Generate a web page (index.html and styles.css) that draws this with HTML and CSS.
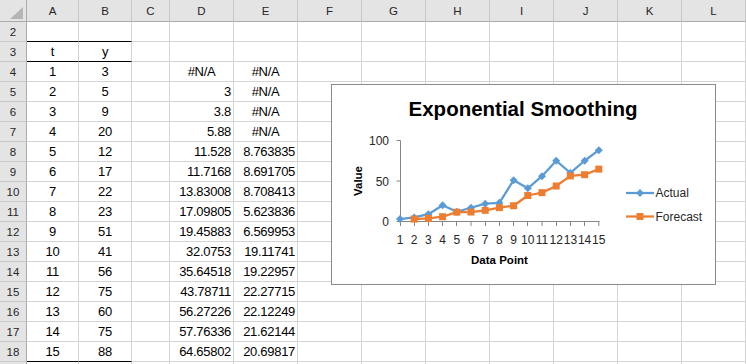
FILE: index.html
```html
<!DOCTYPE html>
<html>
<head>
<meta charset="utf-8">
<title>Exponential Smoothing</title>
<link rel="stylesheet" href="styles.css">
</head>
<body>
<div class="sheet">
  <div class="corner"><svg width="26" height="21"><polygon points="23,7 23,19 10,19" fill="#b5b5b5"/></svg></div>
  <div class="ch">A</div><div class="ch">B</div><div class="ch">C</div><div class="ch">D</div><div class="ch">E</div><div class="ch">F</div><div class="ch">G</div><div class="ch">H</div><div class="ch">I</div><div class="ch">J</div><div class="ch">K</div><div class="ch">L</div>

  <div class="rh">2</div><div class="c bk"></div><div class="c bk"></div><div class="c"></div><div class="c"></div><div class="c"></div><div class="c"></div><div class="c"></div><div class="c"></div><div class="c"></div><div class="c"></div><div class="c"></div><div class="c"></div>
  <div class="rh">3</div><div class="c bk ctr">t</div><div class="c bk ctr">y</div><div class="c"></div><div class="c"></div><div class="c"></div><div class="c"></div><div class="c"></div><div class="c"></div><div class="c"></div><div class="c"></div><div class="c"></div><div class="c"></div>
  <div class="rh">4</div><div class="c ctr">1</div><div class="c ctr">3</div><div class="c"></div><div class="c ctr">#N/A</div><div class="c ctr">#N/A</div><div class="c"></div><div class="c"></div><div class="c"></div><div class="c"></div><div class="c"></div><div class="c"></div><div class="c"></div>
  <div class="rh">5</div><div class="c ctr">2</div><div class="c ctr">5</div><div class="c"></div><div class="c r">3</div><div class="c ctr">#N/A</div><div class="c"></div><div class="c"></div><div class="c"></div><div class="c"></div><div class="c"></div><div class="c"></div><div class="c"></div>
  <div class="rh">6</div><div class="c ctr">3</div><div class="c ctr">9</div><div class="c"></div><div class="c r">3.8</div><div class="c ctr">#N/A</div><div class="c"></div><div class="c"></div><div class="c"></div><div class="c"></div><div class="c"></div><div class="c"></div><div class="c"></div>
  <div class="rh">7</div><div class="c ctr">4</div><div class="c ctr">20</div><div class="c"></div><div class="c r">5.88</div><div class="c ctr">#N/A</div><div class="c"></div><div class="c"></div><div class="c"></div><div class="c"></div><div class="c"></div><div class="c"></div><div class="c"></div>
  <div class="rh">8</div><div class="c ctr">5</div><div class="c ctr">12</div><div class="c"></div><div class="c r">11.528</div><div class="c r">8.763835</div><div class="c"></div><div class="c"></div><div class="c"></div><div class="c"></div><div class="c"></div><div class="c"></div><div class="c"></div>
  <div class="rh">9</div><div class="c ctr">6</div><div class="c ctr">17</div><div class="c"></div><div class="c r">11.7168</div><div class="c r">8.691705</div><div class="c"></div><div class="c"></div><div class="c"></div><div class="c"></div><div class="c"></div><div class="c"></div><div class="c"></div>
  <div class="rh">10</div><div class="c ctr">7</div><div class="c ctr">22</div><div class="c"></div><div class="c r">13.83008</div><div class="c r">8.708413</div><div class="c"></div><div class="c"></div><div class="c"></div><div class="c"></div><div class="c"></div><div class="c"></div><div class="c"></div>
  <div class="rh">11</div><div class="c ctr">8</div><div class="c ctr">23</div><div class="c"></div><div class="c r">17.09805</div><div class="c r">5.623836</div><div class="c"></div><div class="c"></div><div class="c"></div><div class="c"></div><div class="c"></div><div class="c"></div><div class="c"></div>
  <div class="rh">12</div><div class="c ctr">9</div><div class="c ctr">51</div><div class="c"></div><div class="c r">19.45883</div><div class="c r">6.569953</div><div class="c"></div><div class="c"></div><div class="c"></div><div class="c"></div><div class="c"></div><div class="c"></div><div class="c"></div>
  <div class="rh">13</div><div class="c ctr">10</div><div class="c ctr">41</div><div class="c"></div><div class="c r">32.0753</div><div class="c r">19.11741</div><div class="c"></div><div class="c"></div><div class="c"></div><div class="c"></div><div class="c"></div><div class="c"></div><div class="c"></div>
  <div class="rh">14</div><div class="c ctr">11</div><div class="c ctr">56</div><div class="c"></div><div class="c r">35.64518</div><div class="c r">19.22957</div><div class="c"></div><div class="c"></div><div class="c"></div><div class="c"></div><div class="c"></div><div class="c"></div><div class="c"></div>
  <div class="rh">15</div><div class="c ctr">12</div><div class="c ctr">75</div><div class="c"></div><div class="c r">43.78711</div><div class="c r">22.27715</div><div class="c"></div><div class="c"></div><div class="c"></div><div class="c"></div><div class="c"></div><div class="c"></div><div class="c"></div>
  <div class="rh">16</div><div class="c ctr">13</div><div class="c ctr">60</div><div class="c"></div><div class="c r">56.27226</div><div class="c r">22.12249</div><div class="c"></div><div class="c"></div><div class="c"></div><div class="c"></div><div class="c"></div><div class="c"></div><div class="c"></div>
  <div class="rh">17</div><div class="c ctr">14</div><div class="c ctr">75</div><div class="c"></div><div class="c r">57.76336</div><div class="c r">21.62144</div><div class="c"></div><div class="c"></div><div class="c"></div><div class="c"></div><div class="c"></div><div class="c"></div><div class="c"></div>
  <div class="rh">18</div><div class="c bk ctr">15</div><div class="c bk ctr">88</div><div class="c"></div><div class="c r">64.65802</div><div class="c r">20.69817</div><div class="c"></div><div class="c"></div><div class="c"></div><div class="c"></div><div class="c"></div><div class="c"></div><div class="c"></div>
  <div class="rh"></div><div class="c"></div><div class="c"></div><div class="c"></div><div class="c"></div><div class="c"></div><div class="c"></div><div class="c"></div><div class="c"></div><div class="c"></div><div class="c"></div><div class="c"></div><div class="c"></div>

  <div class="chart">
    <svg class="plot" width="383" height="199" viewBox="0 0 383 199">
      <defs>
        <path id="dm" d="M0 -4 L4 0 L0 4 L-4 0 Z" fill="#5b9bd5"/>
        <rect id="sq" x="-3.5" y="-3.5" width="7" height="7" fill="#ed7d31"/>
      </defs>
      <text class="title" x="191" y="31" text-anchor="middle">Exponential Smoothing</text>

      <g stroke="#868686" stroke-width="1" fill="none">
        <path d="M68.5 55.5 V136.5 M64.5 55.5 H68.5 M64.5 96 H68.5 M64.5 136.5 H68.5"/>
        <path d="M68 136.5 H267.5"/>
        <path d="M68.5 136.5 V141 M82.5 136.5 V141 M96.5 136.5 V141 M110.5 136.5 V141 M124.5 136.5 V141 M139 136.5 V141 M153.5 136.5 V141 M167.5 136.5 V141 M181.5 136.5 V141 M195.5 136.5 V141 M210 136.5 V141 M224.5 136.5 V141 M238.5 136.5 V141 M252.5 136.5 V141 M266.8 136.5 V141"/>
      </g>

      <g class="tick" text-anchor="end">
        <text x="57" y="59.8">100</text>
        <text x="57" y="100.5">50</text>
        <text x="57" y="140.8">0</text>
      </g>
      <g class="tick" text-anchor="middle">
        <text x="68" y="158.5">1</text>
        <text x="82.2" y="158.5">2</text>
        <text x="96.4" y="158.5">3</text>
        <text x="110.6" y="158.5">4</text>
        <text x="124.8" y="158.5">5</text>
        <text x="139" y="158.5">6</text>
        <text x="153.2" y="158.5">7</text>
        <text x="167.4" y="158.5">8</text>
        <text x="181.6" y="158.5">9</text>
        <text x="195.8" y="158.5">10</text>
        <text x="210" y="158.5">11</text>
        <text x="224.2" y="158.5">12</text>
        <text x="238.4" y="158.5">13</text>
        <text x="252.6" y="158.5">14</text>
        <text x="266.8" y="158.5">15</text>
      </g>

      <text class="axt" x="167.5" y="179" text-anchor="middle">Data Point</text>
      <text class="axt" transform="translate(30,96) rotate(-90)" text-anchor="middle">Value</text>

      <polyline fill="none" stroke="#5b9bd5" stroke-width="2.25" stroke-linejoin="round"
        points="68,134.07 82.2,132.45 96.4,129.21 110.6,120.3 124.8,126.78 139,122.73 153.2,118.68 167.4,117.87 181.6,95.19 195.8,103.29 210,91.14 224.2,75.75 238.4,87.9 252.6,75.75 266.8,65.22"/>
      <use href="#dm" x="68" y="134.07"/><use href="#dm" x="82.2" y="132.45"/><use href="#dm" x="96.4" y="129.21"/><use href="#dm" x="110.6" y="120.3"/><use href="#dm" x="124.8" y="126.78"/><use href="#dm" x="139" y="122.73"/><use href="#dm" x="153.2" y="118.68"/><use href="#dm" x="167.4" y="117.87"/><use href="#dm" x="181.6" y="95.19"/><use href="#dm" x="195.8" y="103.29"/><use href="#dm" x="210" y="91.14"/><use href="#dm" x="224.2" y="75.75"/><use href="#dm" x="238.4" y="87.9"/><use href="#dm" x="252.6" y="75.75"/><use href="#dm" x="266.8" y="65.22"/>

      <polyline fill="none" stroke="#ed7d31" stroke-width="2.25" stroke-linejoin="round"
        points="82.2,134.07 96.4,133.42 110.6,131.74 124.8,127.16 139,127.01 153.2,125.3 167.4,122.65 181.6,120.74 195.8,110.52 210,107.63 224.2,101.03 238.4,90.92 252.6,89.71 266.8,84.13"/>
      <use href="#sq" x="82.2" y="134.07"/><use href="#sq" x="96.4" y="133.42"/><use href="#sq" x="110.6" y="131.74"/><use href="#sq" x="124.8" y="127.16"/><use href="#sq" x="139" y="127.01"/><use href="#sq" x="153.2" y="125.3"/><use href="#sq" x="167.4" y="122.65"/><use href="#sq" x="181.6" y="120.74"/><use href="#sq" x="195.8" y="110.52"/><use href="#sq" x="210" y="107.63"/><use href="#sq" x="224.2" y="101.03"/><use href="#sq" x="238.4" y="90.92"/><use href="#sq" x="252.6" y="89.71"/><use href="#sq" x="266.8" y="84.13"/>

      <path d="M294 108 H322" stroke="#5b9bd5" stroke-width="2.25"/>
      <use href="#dm" x="308" y="108"/>
      <text class="tick" x="323.5" y="112.3">Actual</text>
      <path d="M294 131.5 H322" stroke="#ed7d31" stroke-width="2.25"/>
      <use href="#sq" x="308" y="131.5"/>
      <text class="tick" x="323.5" y="135.8">Forecast</text>
    </svg>
  </div>
</div>
</body>
</html>
```

FILE: styles.css
```css
html, body {
  margin: 0;
  padding: 0;
  background: #ffffff;
  overflow: hidden;
}

body {
  font-family: "Liberation Sans", Arial, sans-serif;
  width: 746px;
  height: 364px;
}

.sheet {
  position: relative;
  display: grid;
  grid-template-columns: 27px 52px 53px 38px repeat(9, 64px);
  grid-template-rows: 22px;
  grid-auto-rows: 20px;
}

.corner {
  box-sizing: border-box;
  background: #e4e4e4;
  border-right: 1px solid #ababab;
  border-bottom: 1px solid #ababab;
}

.corner svg {
  display: block;
}

.ch {
  box-sizing: border-box;
  background: #e4e4e4;
  border-right: 1px solid #c8c8c8;
  border-bottom: 1px solid #ababab;
  text-align: center;
  font-size: 11.5px;
  line-height: 22px;
  color: #262626;
}

.rh {
  box-sizing: border-box;
  background: #e4e4e4;
  border-right: 1px solid #ababab;
  border-bottom: 1px solid #c8c8c8;
  text-align: center;
  font-size: 11.5px;
  padding-top: 2px;
  line-height: 17px;
  color: #262626;
}

.c {
  box-sizing: border-box;
  border-right: 1px solid #d4d4d4;
  border-bottom: 1px solid #d4d4d4;
  padding: 1px 2px 0 2px;
  font-size: 13px;
  letter-spacing: -0.3px;
  line-height: 17px;
  white-space: nowrap;
  color: #000;
}

.ctr {
  text-align: center;
}

.r {
  text-align: right;
}

.bk {
  border-bottom-color: #000;
}

.chart {
  position: absolute;
  left: 331px;
  top: 84px;
  width: 385px;
  height: 201px;
  box-sizing: border-box;
  border: 1px solid #8a8a8a;
  background: #ffffff;
}

.plot {
  display: block;
  font-family: "Liberation Sans", Arial, sans-serif;
}

.title {
  font-size: 20.5px;
  font-weight: bold;
  fill: #000;
}

.tick,
.tick text {
  font-size: 12px;
  fill: #262626;
}

.axt {
  font-size: 11.5px;
  font-weight: bold;
  fill: #000;
}
```
